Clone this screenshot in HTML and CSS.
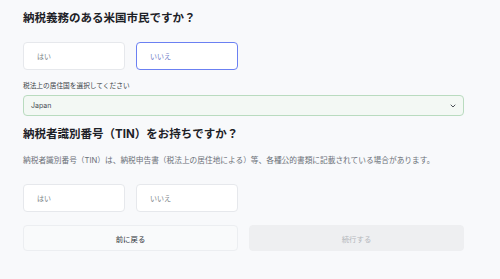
FILE: index.html
```html
<!DOCTYPE html>
<html lang="ja">
<head>
<meta charset="utf-8">
<link rel="stylesheet" href="styles.css">
</head>
<body>
<main class="page">
  <h1 class="title">納税義務のある米国市民ですか？</h1>
  <div class="choices">
    <button class="choice">はい</button>
    <button class="choice selected">いいえ</button>
  </div>
  <label class="label">税法上の居住国を選択してください</label>
  <div class="select">
    <span>Japan</span>
    <svg class="chev" width="8" height="8" viewBox="0 0 8 8"><path d="M2 3l2 2 2-2" fill="none" stroke="#4b5058" stroke-width="1" stroke-linecap="round" stroke-linejoin="round"/></svg>
  </div>
  <h2 class="title title2">納税者識別番号（TIN）をお持ちですか？</h2>
  <p class="desc">納税者識別番号（TIN）は、納税申告書（税法上の居住地による）等、各種公的書類に記載されている場合があります。</p>
  <div class="choices choices2">
    <button class="choice">はい</button>
    <button class="choice">いいえ</button>
  </div>
  <div class="actions">
    <button class="act back">前に戻る</button>
    <button class="act next">続行する</button>
  </div>
</main>
</body>
</html>
```
FILE: styles.css
```css
html, body { margin: 0; padding: 0; }
body {
  background: #f8f9fb;
  font-family: "Inter", "Noto Sans CJK JP", sans-serif;
  width: 500px;
  height: 279px;
  overflow: hidden;
}
.page {
  padding: 8px 36px 0 23px;
  display: flex;
  flex-direction: column;
}
.title {
  margin: 0;
  font-size: 11.5px;
  line-height: 20px;
  font-weight: 700;
  color: #1d2127;
}
.choices {
  margin-top: 14px;
  display: grid;
  grid-template-columns: 102px 102px;
  gap: 11px;
}
.choice {
  height: 28px;
  background: #ffffff;
  border: 1px solid #e6e8ec;
  border-radius: 4px;
  text-align: left;
  padding: 0 0 0 13px;
  font-family: inherit;
  font-size: 7px;
  color: #7a7f87;
}
.choice.selected {
  border-color: #6b80f2;
  color: #6d79c7;
}
.label {
  margin-top: 11px;
  font-size: 6.7px;
  line-height: 10px;
  color: #3a3f46;
}
.select {
  margin-top: 4px;
  height: 21px;
  box-sizing: border-box;
  background: #f3f8f4;
  border: 1px solid #b9dbbf;
  border-radius: 4px;
  display: flex;
  align-items: center;
  justify-content: space-between;
  padding: 0 6px 0 7px;
  font-size: 7px;
  color: #4a4f57;
}
.chev { display: block; }
.title2 { margin-top: 8px; }
.desc {
  margin: 11px 0 0;
  font-size: 7.7px;
  line-height: 12px;
  color: #6b7078;
  white-space: nowrap;
}
.choices2 { margin-top: 17px; }
.actions {
  margin-top: 13px;
  display: grid;
  grid-template-columns: 1fr 1fr;
  gap: 11px;
}
.act {
  height: 26px;
  border-radius: 4px;
  font-family: inherit;
  font-size: 7.4px;
}
.back {
  background: #f9fafb;
  border: 1px solid #eceef1;
  color: #2b2f35;
}
.next {
  background: #eeeff1;
  border: 1px solid #eeeff1;
  color: #b4b7bc;
}
```
